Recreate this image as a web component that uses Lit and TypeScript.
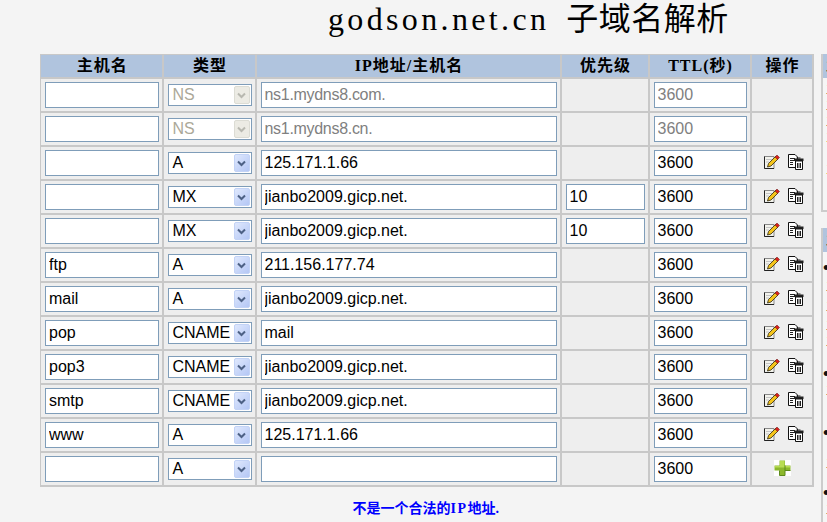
import { LitElement, html, css, svg } from "lit";
import { customElement } from "lit/decorators.js";

type Row = { host: string; type: string; value: string; prio?: string; locked?: boolean; add?: boolean };
type Line = { y: number; t: string; cls?: string };

const rows: Row[] = [
  { host: "", type: "NS", value: "ns1.mydns8.com.", locked: true },
  { host: "", type: "NS", value: "ns1.mydns8.cn.", locked: true },
  { host: "", type: "A", value: "125.171.1.66" },
  { host: "", type: "MX", value: "jianbo2009.gicp.net.", prio: "10" },
  { host: "", type: "MX", value: "jianbo2009.gicp.net.", prio: "10" },
  { host: "ftp", type: "A", value: "211.156.177.74" },
  { host: "mail", type: "A", value: "jianbo2009.gicp.net." },
  { host: "pop", type: "CNAME", value: "mail" },
  { host: "pop3", type: "CNAME", value: "jianbo2009.gicp.net." },
  { host: "smtp", type: "CNAME", value: "jianbo2009.gicp.net." },
  { host: "www", type: "A", value: "125.171.1.66" },
  { host: "", type: "A", value: "", add: true },
];

// y = gap above the line, in px, measured from the end of the previous line
const side1: Line[] = [
  { y: 3, t: "主" }, { y: 0, t: "主" }, { y: 0, t: "主" },
  { y: 0, t: "主", cls: "or" }, { y: 16, t: "主", cls: "or" },
];
const side2: Line[] = [
  { y: 8, t: "•", cls: "dot" }, { y: 2, t: "主" }, { y: 4, t: "主" }, { y: 3, t: "主" }, { y: 0, t: "主" },
  { y: 17, t: "•", cls: "dot" }, { y: 0, t: "主" },
  { y: 27, t: "•", cls: "dot" }, { y: 14, t: "主" },
  { y: 14, t: "•", cls: "dot" }, { y: 0, t: "主" },
];

const editIcon = svg`<svg class="ic" width="17" height="16" viewBox="0 0 17 16">
  <path d="M1.5 2.5H11V14.5H1.5Z" fill="#f2f2ec" stroke="#8a8a8a"/>
  <path d="M1.5 2.5V14.5H11" fill="none" stroke="#222"/>
  <path d="M3 5.5h6M3 8h3" stroke="#c4c4c4"/>
  <path d="M4.5 13L5.5 9.5L12.5 2.5L15 5L8 12Z" fill="#f4c41a" stroke="#2c2410" stroke-width=".8"/>
  <path d="M12 3L14 1L16.5 3.5L14.5 5.5Z" fill="#d8201c" stroke="#5a1010" stroke-width=".5"/>
</svg>`;

const delIcon = svg`<svg class="ic" width="16" height="16" viewBox="0 0 16 16">
  <path d="M.5 .5H7L9.5 3V13.5H.5Z" fill="#fff" stroke="#111"/>
  <path d="M2 4.5h5M2 6.5h5M2 8.5h3M2 10.5h3" stroke="#222"/>
  <path d="M6 4.5H15.5V7H6Z" fill="#222"/>
  <path d="M8.5 3.5h4v1h-4Z" fill="#222"/>
  <path d="M7.5 7H14.5V15.5H7.5Z" fill="#fff" stroke="#111"/>
  <path d="M9.5 9v5M11 9v5M12.5 9v5" stroke="#222"/>
</svg>`;

const plusIcon = svg`<svg width="17" height="16" viewBox="0 0 17 16">
  <rect width="17" height="16" fill="#fff"/>
  <path d="M5.5 .5H11V5.5H16.5V10.5H11V15.5H5.5V10.5H.5V5.5H5.5Z" fill="#8cb82c"/>
  <path d="M6 1H10.5V6H16V7.5H1V6H6Z" fill="#b8dc52"/>
  <path d="M11 5.5V10.5H16.5M5.5 10.5V15.5H11V10.5" fill="none" stroke="#5d8a1c"/>
</svg>`;

@customElement("type-select")
class TypeSelect extends LitElement {
  static properties = { value: {}, locked: { type: Boolean } };
  value = "";
  locked = false;
  static styles = css`
    :host { display: block; }
    .box {
      box-sizing: border-box; width: 84px; height: 22px; border: 1px solid #7f9db9; background: #fff;
      display: flex; align-items: center; justify-content: space-between; padding: 1px 1px 1px 4px;
      font: 16px "Liberation Sans", Arial, sans-serif; color: #000;
    }
    .btn {
      width: 16px; height: 18px; box-sizing: border-box; border-radius: 2px; border: 1px solid #c3d3f6;
      background: linear-gradient(135deg, #dfe8fd, #b4c7f5); display: flex; align-items: center; justify-content: center;
    }
    .locked { color: #aca899; }
    .locked .btn { background: #ecebe4; border-color: #dcdcd4; }
  `;
  render() {
    return html`<div class="box ${this.locked ? "locked" : ""}">
      <span>${this.value}</span>
      <span class="btn"><svg width="9" height="7" viewBox="0 0 9 7"><path d="M1 1.5L4.5 5L8 1.5" fill="none" stroke=${this.locked ? "#b8b8b0" : "#4d6185"} stroke-width="2"/></svg></span>
    </div>`;
  }
}

@customElement("app-root")
export class AppRoot extends LitElement {
  static styles = css`
    :host { display: block; width: 827px; height: 522px; overflow: hidden; background: #f4f4f4; font-family: "Liberation Sans", Arial, sans-serif; }
    .page { display: flex; align-items: flex-start; padding-left: 40px; gap: 8px; width: 900px; }
    .main { width: 773px; flex: none; }
    h1 {
      margin: 0; height: 54px; box-sizing: border-box; padding: 0 0 0 288px; font-weight: 400; font-size: 32px; line-height: 38px; white-space: nowrap;
      font-family: "Liberation Serif", "Noto Sans CJK SC", serif; color: #000;
    }
    h1 .lat { letter-spacing: 3.35px; margin-right: 17px; }
    h1 .cjk { letter-spacing: .5px; }
    table { border-collapse: collapse; table-layout: fixed; width: 772px; }
    th {
      background: #b0c4de; height: 22px; padding: 0 0 0 2px; font-size: 16px; line-height: 22px; font-weight: 700; text-align: center; letter-spacing: 1px;
      font-family: "Liberation Serif", "Noto Sans CJK SC", serif; color: #000; border: 2px solid #c8c8c8;
    }
    td { background: #eeeeee; height: 32px; padding: 0 3px 0 4px; border: 2px solid #c8c8c8; box-sizing: content-box; }
    th, td { border-width: 1px 2px 2px 1px; }
    input {
      display: block; box-sizing: border-box; width: 100%; height: 26px; margin: 0; padding: 1px 3px; background: #fff;
      border: 1px solid #7f9db9; font: 16px "Liberation Sans", Arial, sans-serif; color: #000; border-radius: 0; outline: none;
    }
    input.muted { color: #808080; }
    input.tight { letter-spacing: -.3px; }
    .ops { display: flex; justify-content: center; align-items: center; gap: 8px; padding: 0 0 2px 2px; }
    .ic { display: block; }
    .add { display: flex; justify-content: center; padding-bottom: 2px; }
    .msg {
      margin: 13px 0 0; text-align: center; color: #0000ff; font: 700 14px/18px "Liberation Serif", "Noto Sans CJK SC", serif;
    }
    .msg span { letter-spacing: 1.5px; }
    .side { width: 140px; flex: none; margin-top: 54px; }
    .panel { border: 2px solid #cccccc; border-right: 0; border-top: 0; background: #f6f6f6; box-sizing: border-box; font-family: "Liberation Serif", "Noto Sans CJK SC", serif; white-space: nowrap; }
    .hd { height: 24px; background: #b0c4de; font-size: 13px; font-weight: 700; line-height: 24px; padding-left: 3px; box-sizing: border-box; color: #111; }
    .ln { font-size: 13px; line-height: 16px; height: 16px; padding-left: 3px; color: #111; }
    .or { color: #e8a33a; }
    .dot { font-size: 18px; padding-left: 0; font-family: "Liberation Sans", sans-serif; color: #111; }
    .p1 { height: 158px; margin-bottom: 16px; }
    .p2 { height: 300px; }
  `;

  cell(r: Row) {
    const muted = r.locked ? "muted" : "";
    return html`<tr>
      <td><input .value=${r.host} /></td>
      <td><type-select .value=${r.type} .locked=${!!r.locked}></type-select></td>
      <td><input class="${muted} ${r.locked ? "tight" : ""}" .value=${r.value} /></td>
      <td>${r.prio ? html`<input .value=${r.prio} />` : ""}</td>
      <td><input class=${muted} value="3600" /></td>
      <td>${r.add
        ? html`<div class="add">${plusIcon}</div>`
        : r.locked ? "" : html`<div class="ops">${editIcon}${delIcon}</div>`}</td>
    </tr>`;
  }

  lines(items: Line[]) {
    return items.map((l) => html`<div class="ln ${l.cls ?? ""}" style="margin-top:${l.y}px">${l.t}</div>`);
  }

  render() {
    return html`<div class="page">
      <div class="main">
        <h1><span class="lat">godson.net.cn</span><span class="cjk">子域名解析</span></h1>
        <table>
          <colgroup><col style="width:122px" /><col style="width:93px" /><col style="width:305px" /><col style="width:88px" /><col style="width:102px" /><col style="width:62px" /></colgroup>
          <thead><tr><th>主机名</th><th>类型</th><th>IP地址/主机名</th><th>优先级</th><th>TTL(秒)</th><th>操作</th></tr></thead>
          <tbody>${rows.map((r) => this.cell(r))}</tbody>
        </table>
        <p class="msg">不是一个合法的<span>IP</span>地址<span>.</span></p>
      </div>
      <div class="side">
        <div class="panel p1"><div class="hd">主</div>${this.lines(side1)}</div>
        <div class="panel p2"><div class="hd">主</div>${this.lines(side2)}</div>
      </div>
    </div>`;
  }
}
